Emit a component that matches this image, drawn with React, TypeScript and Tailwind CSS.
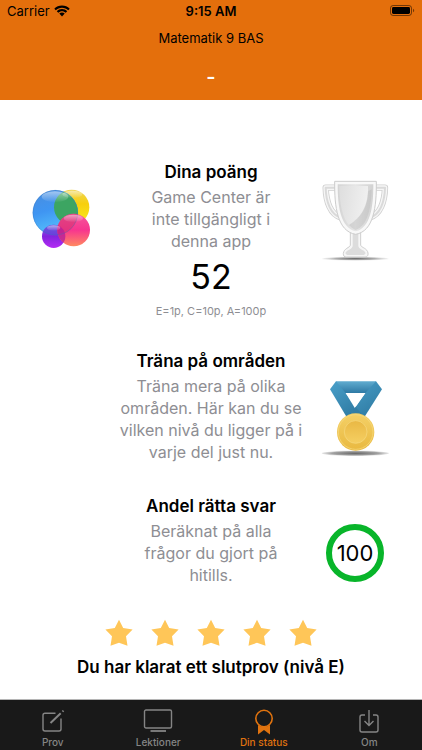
import type { ReactNode } from "react";

function StatusBar() {
  return (
    <div className="grid h-[22px] grid-cols-3 items-center px-[7px] text-[13px] leading-4">
      <div className="flex items-center gap-1">
        <span>Carrier</span>
        <svg width="16" height="12" viewBox="0 0 16 12" aria-hidden="true">
          <path d="M8 0.6C11 0.6 13.7 1.8 15.7 3.7L14.2 5.2C12.6 3.7 10.4 2.7 8 2.7S3.4 3.7 1.8 5.2L0.3 3.7C2.3 1.8 5 0.6 8 0.6Z" />
          <path d="M8 4.1C10 4.1 11.9 4.9 13.2 6.2L11.7 7.7C10.7 6.8 9.4 6.2 8 6.2S5.3 6.8 4.3 7.7L2.8 6.2C4.1 4.9 6 4.1 8 4.1Z" />
          <path d="M8 7.5C9.1 7.5 10 7.9 10.7 8.6L8 11.4L5.3 8.6C6 7.9 6.9 7.5 8 7.5Z" />
        </svg>
      </div>
      <span className="text-center font-semibold">9:15 AM</span>
      <svg className="justify-self-end" width="25" height="12" viewBox="0 0 25 12" aria-hidden="true">
        <rect x="0.5" y="0.5" width="21" height="10" rx="2.6" fill="none" stroke="#000" strokeOpacity="0.5" />
        <rect x="2" y="2" width="18" height="7" rx="1.4" />
        <path d="M23 3.8C24.6 4.5 24.6 6.5 23 7.2Z" fillOpacity="0.5" />
      </svg>
    </div>
  );
}

function Bubbles() {
  return (
    <svg width="60" height="62" viewBox="36 24 180 186" aria-hidden="true">
      <defs>
        <linearGradient id="blue" x1="0" y1="0" x2="0.3" y2="1">
          <stop offset="0" stopColor="#4a8ddd" />
          <stop offset="0.5" stopColor="#3f95f2" />
          <stop offset="1" stopColor="#55c1fc" />
        </linearGradient>
        <linearGradient id="yellow" x1="0" y1="0" x2="0" y2="1">
          <stop offset="0" stopColor="#eed65b" />
          <stop offset="0.4" stopColor="#f7cf0c" />
          <stop offset="1" stopColor="#f9ec24" />
        </linearGradient>
        <linearGradient id="pink" x1="0" y1="0" x2="0" y2="1">
          <stop offset="0" stopColor="#f4589c" />
          <stop offset="0.5" stopColor="#f7358f" />
          <stop offset="1" stopColor="#ff8a60" />
        </linearGradient>
        <linearGradient id="purple" x1="0" y1="0" x2="0" y2="1">
          <stop offset="0" stopColor="#7c67e4" />
          <stop offset="0.5" stopColor="#8423de" />
          <stop offset="1" stopColor="#b32bf4" />
        </linearGradient>
        <linearGradient id="shine" x1="0" y1="0" x2="0" y2="1">
          <stop offset="0" stopColor="#fff" stopOpacity="0.5" />
          <stop offset="1" stopColor="#fff" stopOpacity="0.03" />
        </linearGradient>
        <clipPath id="blueClip">
          <circle cx="106" cy="98" r="68" />
        </clipPath>
        <clipPath id="pinkClip">
          <circle cx="161" cy="150" r="49" />
        </clipPath>
      </defs>
      <circle cx="155" cy="82" r="53" fill="url(#yellow)" />
      <circle cx="106" cy="98" r="68" fill="url(#blue)" />
      <circle cx="155" cy="82" r="53" fill="#3ca562" clipPath="url(#blueClip)" />
      <circle cx="101" cy="169" r="35" fill="url(#purple)" />
      <circle cx="101" cy="169" r="35" fill="#5a4ed8" fillOpacity="0.55" clipPath="url(#blueClip)" />
      <circle cx="161" cy="150" r="49" fill="url(#pink)" />
      <circle cx="106" cy="98" r="68" fill="#cf316e" fillOpacity="0.5" clipPath="url(#pinkClip)" />
      <circle cx="101" cy="169" r="35" fill="#b81f98" fillOpacity="0.8" clipPath="url(#pinkClip)" />
      <circle cx="106" cy="98" r="67" fill="none" stroke="#3675bd" strokeOpacity="0.5" strokeWidth="2" />
      <ellipse cx="105" cy="50" rx="40" ry="16" fill="url(#shine)" />
      <ellipse cx="157" cy="43" rx="30" ry="11" fill="url(#shine)" />
      <ellipse cx="160" cy="115" rx="29" ry="11" fill="url(#shine)" />
      <ellipse cx="101" cy="144" rx="20" ry="8" fill="url(#shine)" />
    </svg>
  );
}

function Trophy() {
  return (
    <svg className="-my-3" width="70" height="86" viewBox="30 18 210 258" aria-hidden="true">
      <defs>
        <linearGradient id="cup" x1="0" x2="1">
          <stop offset="0" stopColor="#d4d4d4" />
          <stop offset="0.5" stopColor="#e6e6e6" />
          <stop offset="1" stopColor="#d2d2d2" />
        </linearGradient>
        <linearGradient id="gloss" x1="0" y1="0" x2="1" y2="0.2">
          <stop offset="0" stopColor="#dedede" />
          <stop offset="1" stopColor="#f0f0f0" />
        </linearGradient>
        <radialGradient id="ground">
          <stop offset="0" stopColor="#666" />
          <stop offset="0.6" stopColor="#b0b0b0" />
          <stop offset="1" stopColor="#e4e4e4" stopOpacity="0.5" />
        </radialGradient>
      </defs>
      <ellipse cx="136" cy="266" rx="100" ry="6" fill="url(#ground)" />
      <g fill="none" strokeLinejoin="round">
        <path d="M82 53H47C48 94 61 135 94 143M190 53H225C224 94 211 135 178 143" stroke="#d0d0d0" strokeWidth="19" />
        <path d="M82 53H47C48 94 61 135 94 143M190 53H225C224 94 211 135 178 143" stroke="#f6f6f6" strokeWidth="14" />
        <path d="M82 53H47C48 94 61 135 94 143M190 53H225C224 94 211 135 178 143" stroke="#dadada" strokeWidth="6" />
      </g>
      <path d="M121 185H152V226C155 233 172 235 174 249C175 259 170 261 163 261H110C103 261 99 258 100 250C102 235 119 233 121 226Z" fill="#f6f6f6" stroke="#cfcfcf" strokeWidth="3" />
      <path d="M128 185H145V229C149 240 165 240 167 250L162 255H111L106 250C109 240 124 240 128 229Z" fill="#dcdcdc" />
      <path d="M74 34H199C200 110 191 184 137 193C82 184 73 110 74 34Z" fill="#f8f8f8" stroke="#cdcdcd" strokeWidth="3" />
      <path d="M83 43H190C190 109 182 174 137 184C91 174 83 109 83 43Z" fill="url(#cup)" />
      <path d="M88 48H174C177 105 157 141 117 165C98 146 88 100 88 48Z" fill="url(#gloss)" />
      <path d="M174 64C172 111 151 145 117 165C128 177 137 180 137 180C173 169 184 112 185 58Z" fill="#b4b4b4" fillOpacity="0.35" />
    </svg>
  );
}

function Medal() {
  return (
    <svg width="70" height="76" viewBox="30 30 210 228" aria-hidden="true">
      <defs>
        <linearGradient id="ribbonTop" x1="0" y1="0" x2="0" y2="1">
          <stop offset="0" stopColor="#60acd0" />
          <stop offset="1" stopColor="#2e79a4" />
        </linearGradient>
        <linearGradient id="ribbon" x1="0" y1="0" x2="0.6" y2="1">
          <stop offset="0" stopColor="#4aa0ca" />
          <stop offset="1" stopColor="#2f7ba3" />
        </linearGradient>
        <linearGradient id="gold" x1="0" y1="0" x2="0" y2="1">
          <stop offset="0" stopColor="#f4d067" />
          <stop offset="1" stopColor="#e9b940" />
        </linearGradient>
        <linearGradient id="goldInner" x1="0" y1="0" x2="0" y2="1">
          <stop offset="0" stopColor="#e9b844" />
          <stop offset="1" stopColor="#f5cf62" />
        </linearGradient>
        <radialGradient id="medalGround">
          <stop offset="0" stopColor="#676767" />
          <stop offset="0.7" stopColor="#a3a3a3" />
          <stop offset="1" stopColor="#d3d3d3" stopOpacity="0.6" />
        </radialGradient>
      </defs>
      <ellipse cx="136" cy="247" rx="101" ry="8" fill="url(#medalGround)" />
      <path d="M78 31H198L204 66H72Z" fill="url(#ribbonTop)" />
      <path d="M78 31L60 55L113 143H154L107 66Z" fill="url(#ribbon)" />
      <path d="M198 31L216 55L159 145H113L137 107L166 66Z" fill="url(#ribbon)" />
      <path d="M137 107L155 130L147 145H113Z" fill="#31789d" fillOpacity="0.6" />
      <path d="M107 66H166L137 107Z" fill="#fff" />
      <circle cx="137" cy="183" r="56" fill="url(#gold)" />
      <circle cx="137" cy="183" r="52" fill="none" stroke="#f7dc84" strokeWidth="2" />
      <circle cx="137" cy="183" r="34" fill="url(#goldInner)" stroke="#f6d981" strokeWidth="2" />
    </svg>
  );
}

type SectionProps = {
  title: string;
  left?: ReactNode;
  right: ReactNode;
  children: ReactNode;
  narrow?: boolean;
};

function Section({ title, left, right, children, narrow }: SectionProps) {
  return (
    <section>
      <h2 className="mb-[3px] text-center font-semibold leading-[22px]">{title}</h2>
      <div className="grid grid-cols-[1fr_auto_1fr] items-center">
        <div className="pl-8">{left}</div>
        <p className={`${narrow ? "w-36" : "w-[194px]"} text-center text-[16px] leading-[22px] text-[#8e8e93]`}>
          {children}
        </p>
        <div className="flex justify-end pr-8">
          <div className="flex w-[70px] justify-center">{right}</div>
        </div>
      </div>
    </section>
  );
}

function Star() {
  return (
    <svg width="28" height="28" viewBox="0 0 28 28" fill="#ffc658" aria-hidden="true">
      <path d="M14 0.8L18.2 9L27.6 10.5L21 17.3L22.5 26.8L14 23.8L5.5 26.8L7 17.3L0.4 10.5L9.8 9Z" />
    </svg>
  );
}

const tabs = [
  {
    label: "Prov",
    icon: (
      <>
        <path d="M17.5 4.2H7Q5 4.2 5 6.2V20Q5 22 7 22H21Q23 22 23 20V9.5" />
        <path d="M12.5 14L22.7 4.3M24.5 2.6L25.5 1.6" strokeWidth="2" />
      </>
    ),
  },
  {
    label: "Lektioner",
    icon: (
      <>
        <rect x="1.5" y="1" width="27" height="18" rx="1.5" />
        <path d="M7.5 22H23" strokeWidth="1.8" />
      </>
    ),
  },
  {
    label: "Din status",
    active: true,
    icon: (
      <>
        <path d="M9 16Q15 20 21 16V25.5L15 21L9 25.5Z" fill="currentColor" stroke="none" />
        <circle cx="15" cy="9.5" r="8.2" fill="#191919" strokeWidth="1.6" />
      </>
    ),
  },
  {
    label: "Om",
    icon: (
      <>
        <path d="M11 6H8Q6 6 6 8V21Q6 23 8 23H22Q24 23 24 21V8Q24 6 22 6H19" />
        <path d="M15 1V16M10.5 12L15 16.5L19.5 12" />
      </>
    ),
  },
];

export default function App() {
  return (
    <div className="flex min-h-screen flex-col bg-white font-['Inter','Noto_Sans',sans-serif] text-[17px] leading-[22px] text-black">
      <header className="h-[100px] bg-[#e46f0c]">
        <StatusBar />
        <h1 className="mt-2 text-center text-[13px] leading-4">Matematik 9 BAS</h1>
        <p className="mt-5 text-center text-[20px] font-semibold text-white">-</p>
      </header>

      <main className="flex-1 pt-[61px]">
        <Section title="Dina poäng" left={<Bubbles />} right={<Trophy />} narrow>
          Game Center är inte tillgängligt i denna app
        </Section>
        <p className="mt-1 text-center text-[34px] leading-[42px]">52</p>
        <p className="mt-[5px] text-center text-[11px] leading-4 text-[#8e8e93]">E=1p, C=10p, A=100p</p>

        <div className="mt-[31px]">
          <Section title="Träna på områden" right={<Medal />}>
            Träna mera på olika områden. Här kan du se vilken nivå du ligger på i varje del just nu.
          </Section>
        </div>

        <div className="mt-8">
          <Section
            title="Andel rätta svar"
            right={
              <div className="flex size-[58px] items-center justify-center rounded-full border-[6px] border-[#08b52a] text-[22px] text-black">
                100
              </div>
            }
            narrow
          >
            Beräknat på alla frågor du gjort på hitills.
          </Section>
        </div>

        <div className="mt-[33px] flex justify-center gap-[18px]" role="img" aria-label="5">
          <Star />
          <Star />
          <Star />
          <Star />
          <Star />
        </div>
        <p className="mt-[9px] text-center font-semibold">Du har klarat ett slutprov (nivå E)</p>
      </main>

      <nav className="grid h-[51px] grid-cols-4 border-t border-[#b5b5b5] bg-[#191919]">
        {tabs.map((tab) => (
          <button
            key={tab.label}
            type="button"
            aria-current={tab.active ? "page" : undefined}
            className={`flex flex-col items-center pt-[9px] text-[10px] font-medium leading-3 ${
              tab.active ? "text-[#e0730f]" : "text-[#858585]"
            }`}
          >
            <svg width="30" height="27" viewBox="0 0 30 27" fill="none" stroke="currentColor" strokeWidth="1.4" aria-hidden="true">
              {tab.icon}
            </svg>
            {tab.label}
          </button>
        ))}
      </nav>
    </div>
  );
}
